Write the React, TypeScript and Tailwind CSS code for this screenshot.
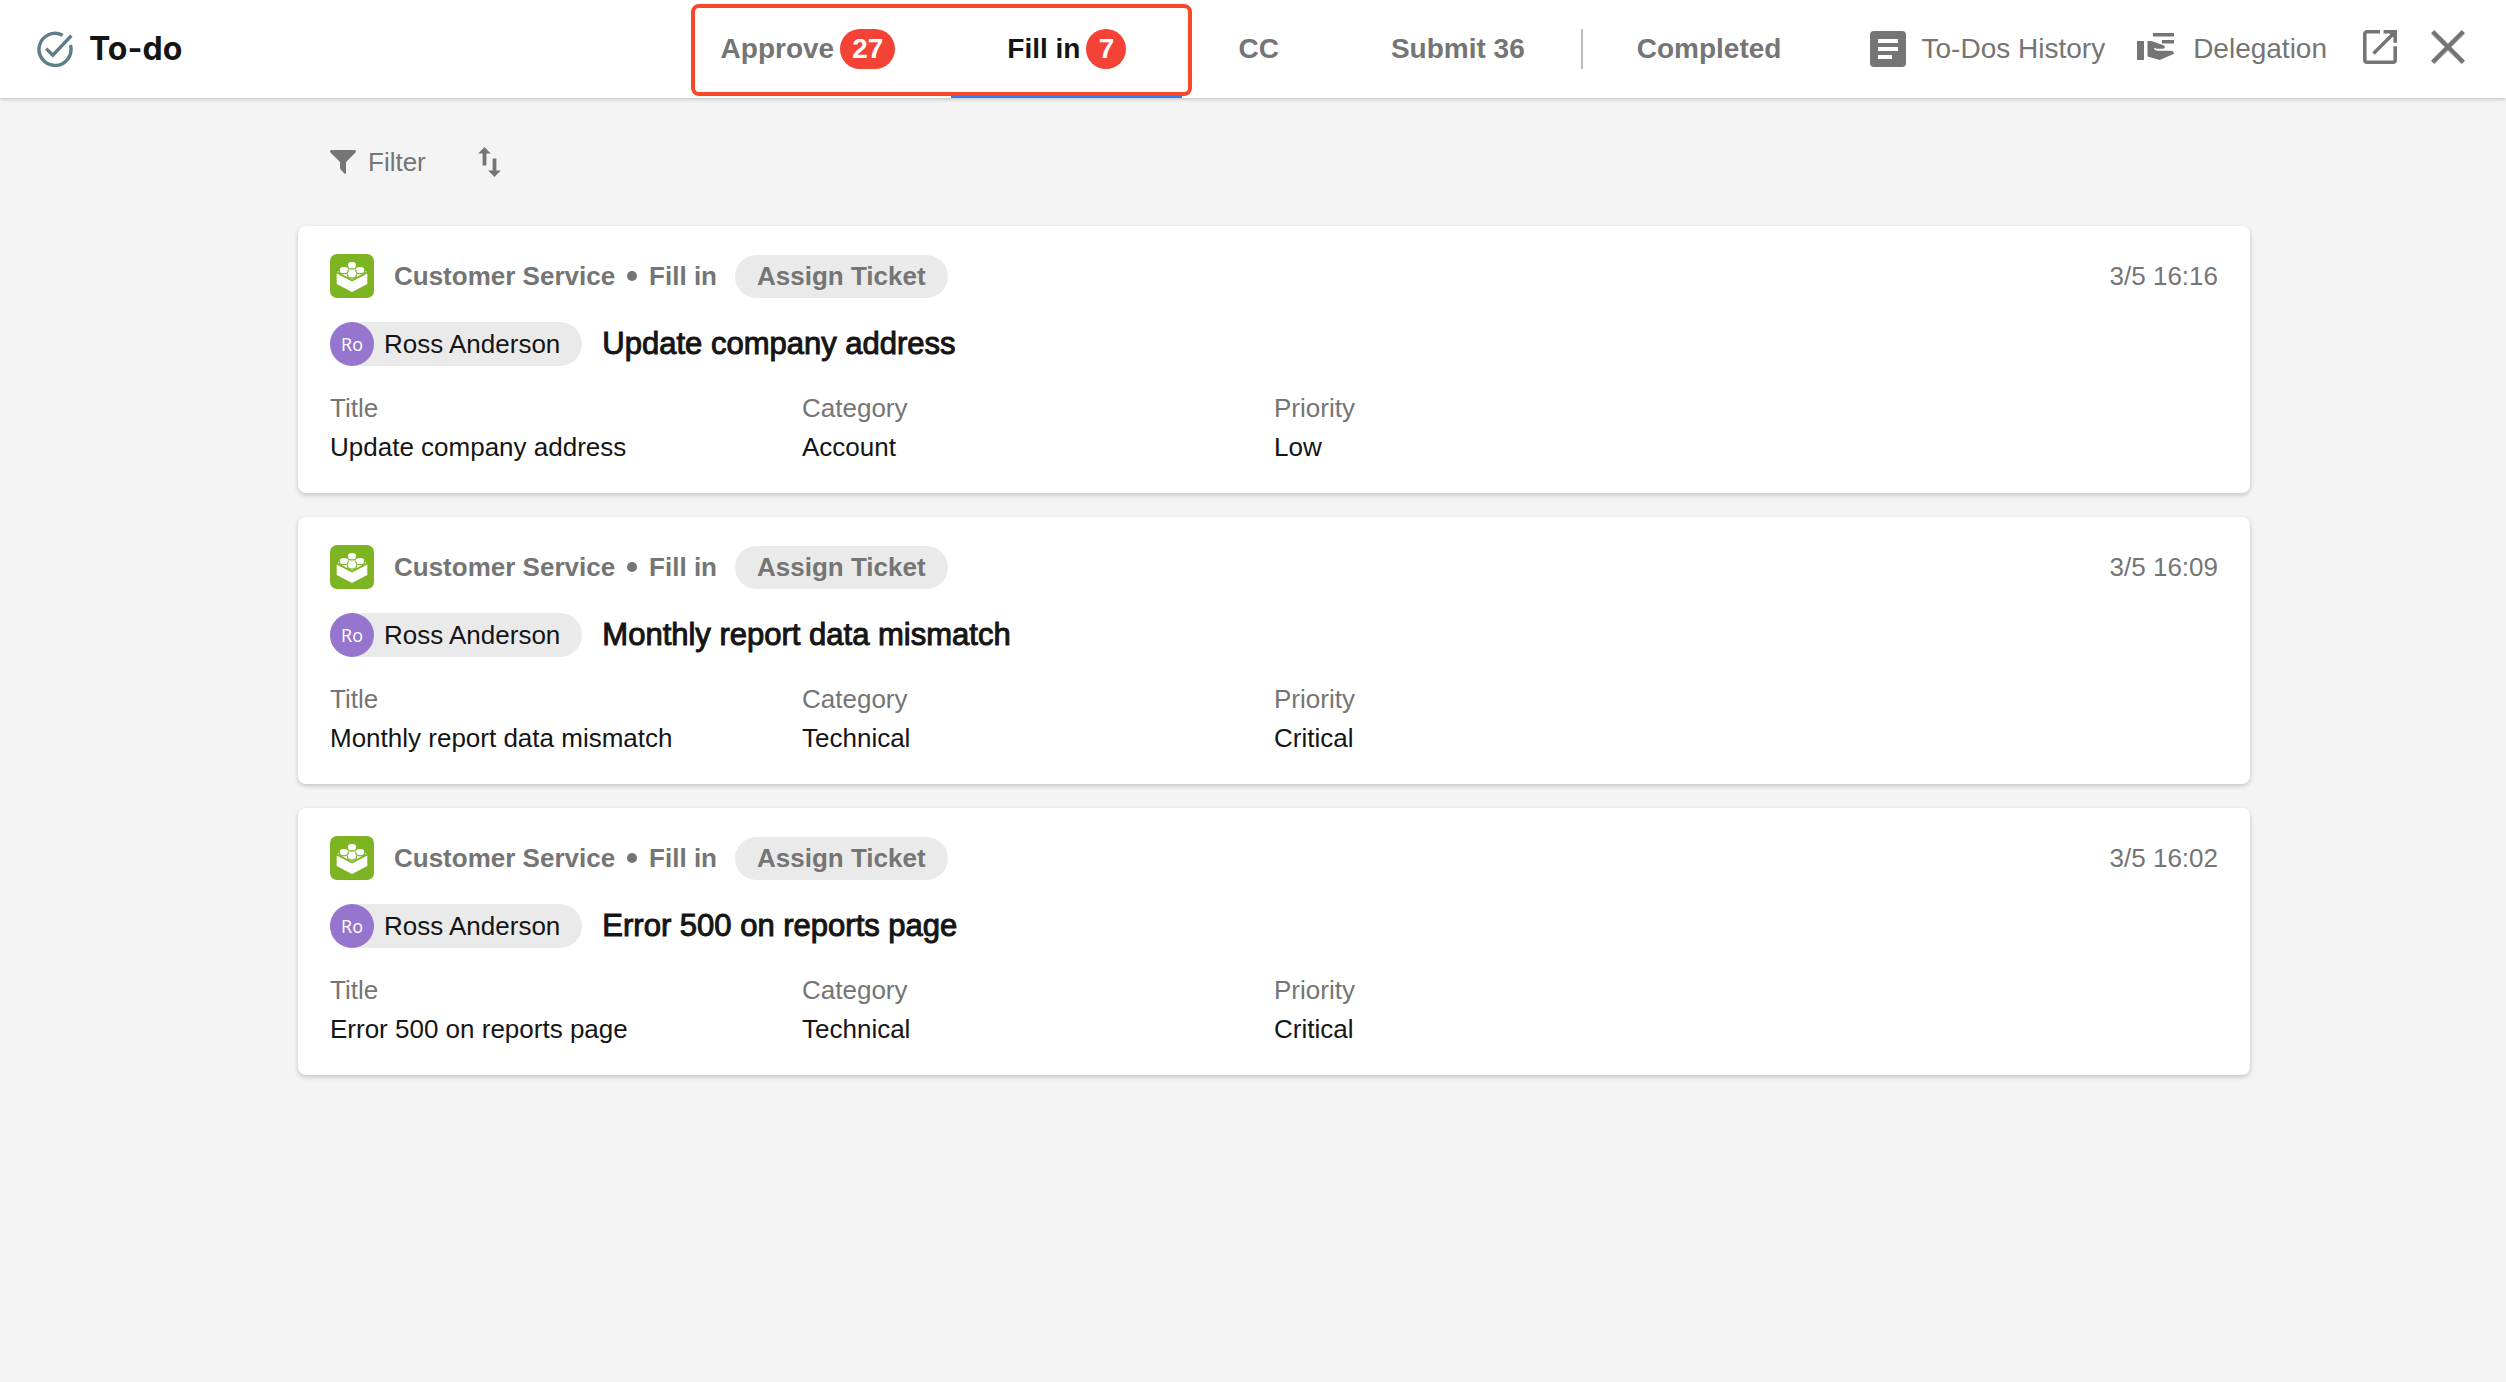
const tickets = [
  { id: 1, title: "Update company address", category: "Account", priority: "Low", time: "3/5 16:16" },
  { id: 2, title: "Monthly report data mismatch", category: "Technical", priority: "Critical", time: "3/5 16:09" },
  { id: 3, title: "Error 500 on reports page", category: "Technical", priority: "Critical", time: "3/5 16:02" },
];

const tabs = [
  { label: "Approve", badge: 27 },
  { label: "Fill in", badge: 7, active: true },
  { label: "CC" },
  { label: "Submit 36" },
  { label: "Completed", divided: true },
];

function TodoIcon() {
  return (
    <svg width="36" height="36" viewBox="0 0 36 36" fill="none" stroke="#607d8b" strokeWidth="3.4">
      <path d="M25.6 4.3A16 16 0 1 0 33.4 14" />
      <path d="M9.2 17.6l6.6 6.6L34.4 4.6" />
    </svg>
  );
}

function HistoryIcon() {
  return (
    <svg width="36" height="36" viewBox="0 0 36 36">
      <rect width="36" height="36" rx="4" fill="#757575" />
      <path d="M8 8h20v4H8zM8 16h20v4H8zM8 24h14v4H8z" fill="#fff" />
    </svg>
  );
}

function DelegationIcon() {
  return (
    <svg width="38" height="38" viewBox="0 0 38 38" fill="#757575">
      <path d="M0 11h7v19H0zM16 3h21v3.6H16zM25 10h12v3.4H25z" />
      <path d="M10.500 11h4l12 4.300c2 .9 1.800 3.300-.4 3.500h-6.200l-2.400-.9-.5 1.400 3.400 1.500H34c2 0 3 1.400 3 3L22.700 30l-12.200-3.600z" />
    </svg>
  );
}

function OpenIcon() {
  return (
    <svg width="34" height="34" viewBox="0 0 34 34" fill="none" stroke="#757575" strokeWidth="3.6">
      <path d="M17 1.800H4A2.200 2.200 0 0 0 1.800 4v26A2.200 2.200 0 0 0 4 32.200h26a2.200 2.200 0 0 0 2.200-2.200V16.200" />
      <path d="M20.600 1.800h11.600v11M31 3L10.500 23.500" />
      <path d="M26 3h5v5z" fill="#757575" stroke="none" />
    </svg>
  );
}

function CloseIcon() {
  return (
    <svg width="34" height="34" viewBox="0 0 34 34" fill="none" stroke="#757575" strokeWidth="4.600">
      <path d="M1.600 1.600l30.800 30.800M32.400 1.600L1.600 32.400" />
    </svg>
  );
}

function FilterIcon() {
  return (
    <svg width="26" height="24" viewBox="0 0 26 24" fill="#757575">
      <path d="M1.500 0h23c1.300 0 1.900 1.500 1 2.500L16 12v11c0 .9-.8 1.200-1.500.6l-3.900-4.100c-.4-.4-.6-.8-.6-1.400V12L.5 2.500C-.4 1.500.2 0 1.500 0z" />
    </svg>
  );
}

function SortIcon() {
  return (
    <svg width="23" height="30" viewBox="0 0 23 30" fill="#757575">
      <path d="M6.500 0l6.300 6.500H8.400v12H4.600v-12H.2zM16.500 30l-6.300-6.500h4.400v-12h3.800v12h4.400z" />
    </svg>
  );
}

function BrickIcon() {
  return (
    <svg width="44" height="44" viewBox="0 0 44 44" className="shrink-0">
      <rect width="44" height="44" rx="7" fill="#7cb521" />
      <path d="M6.700 19.600L22 27.600l15.300-8V30L22 38 6.700 30z" fill="#fff" />
      <path d="M22 11.500l14.500 6.200L22 25.600 7.500 17.700z" fill="#fff" />
      <g fill="#fff" stroke="#7cb521" strokeWidth="1.200">
        <path d="M17.700 10v2.400c0 3.400 8.600 3.400 8.600 0V10" />
        <path d="M9.500 15.200v2c0 3.400 8.600 3.400 8.600 0v-2" />
        <path d="M25.900 15.200v2c0 3.400 8.600 3.400 8.600 0v-2" />
        <path d="M17.700 19.700v1.800c0 3.400 8.600 3.400 8.600 0v-1.800" />
      </g>
      <g fill="#fff">
        <ellipse cx="22" cy="10.300" rx="3.900" ry="2.200" />
        <ellipse cx="13.800" cy="15.200" rx="3.900" ry="2.200" />
        <ellipse cx="30.200" cy="15.200" rx="3.900" ry="2.200" />
        <ellipse cx="22" cy="19.800" rx="3.900" ry="2.200" />
      </g>
    </svg>
  );
}

function Header() {
  return (
    <header className="relative flex h-[98px] bg-white shadow-[0_1px_4px_rgba(0,0,0,0.24)]">
      <div className="flex flex-1 basis-0 items-center gap-4 pl-[37px]">
        <TodoIcon />
        <h1 className="font-['Inter'] text-[32px] font-bold text-[#151515]">To-do</h1>
      </div>

      <nav className="relative flex">
        {tabs.map((tab) => (
          <button
            key={tab.label}
            className={`relative flex items-center gap-1.5 px-14 text-[28px] font-bold ${
              tab.active ? "text-[#151515]" : "text-[#757575]"
            }`}
          >
            {tab.divided && <span className="absolute left-0 h-10 w-0.5 bg-[#bdbdbd]" />}
            {tab.label}
            {tab.badge && (
              <span className="flex h-10 min-w-10 items-center justify-center rounded-full bg-[#f44336] px-3 text-white">
                {tab.badge}
              </span>
            )}
            {tab.active && <span className="absolute inset-x-0 bottom-0 h-1 bg-[#2d7ff9]" />}
          </button>
        ))}
        {/* outline around the two tabs that have pending items */}
        <div className="pointer-events-none absolute top-1 left-[26px] h-[92px] w-[501px] rounded-lg border-4 border-[#f94827]" />
      </nav>

      <div className="flex flex-1 basis-0 items-center justify-end pr-[41px] text-[28px] whitespace-nowrap text-[#757575]">
        <button className="flex items-center gap-4">
          <HistoryIcon />
          To-Dos History
        </button>
        <button className="ml-8 flex items-center gap-[18px]">
          <DelegationIcon />
          Delegation
        </button>
        <button aria-label="Open in new window" className="ml-9 pb-1">
          <OpenIcon />
        </button>
        <button aria-label="Close" className="ml-[34px] pb-1">
          <CloseIcon />
        </button>
      </div>
    </header>
  );
}

function TicketCard({ ticket }: { ticket: (typeof tickets)[0] }) {
  const fields = [
    { name: "Title", value: ticket.title },
    { name: "Category", value: ticket.category },
    { name: "Priority", value: ticket.priority },
  ];

  return (
    <article className="rounded-lg bg-white px-8 pt-7 pb-[26px] shadow-[0_2px_5px_rgba(0,0,0,0.2)]">
      <div className="flex h-11 items-center font-bold text-[#757575]">
        <BrickIcon />
        <span className="ml-5">Customer Service</span>
        <span className="mx-3 size-2.5 rounded-full bg-[#757575]" />
        <span>Fill in</span>
        <span className="ml-[18px] flex h-[43px] items-center rounded-full bg-[#eaeaea] px-[22px]">Assign Ticket</span>
        <time className="ml-auto font-normal">{ticket.time}</time>
      </div>

      <div className="mt-6 flex h-11 items-center gap-5">
        <span className="flex h-11 items-center gap-2.5 rounded-full bg-[#eaeaea] pr-[22px]">
          <span className="flex size-11 items-center justify-center rounded-full bg-[#9575cd] font-['Open_Sans'] text-lg text-white">
            Ro
          </span>
          Ross Anderson
        </span>
        <h2 className="text-[31px] [-webkit-text-stroke:1px_currentColor]">{ticket.title}</h2>
      </div>

      <dl className="mt-[23px] grid grid-cols-4">
        {fields.map((field) => (
          <div key={field.name} className="leading-[39px]">
            <dt className="text-[#757575]">{field.name}</dt>
            <dd>{field.value}</dd>
          </div>
        ))}
      </dl>
    </article>
  );
}

export default function App() {
  return (
    <div className="min-h-screen bg-[#f4f4f4] font-['Liberation_Sans',sans-serif] text-[26px] text-[#151515]">
      <Header />
      <main className="pr-64 pl-[298px]">
        <div className="flex h-32 items-center gap-[52px] px-8 text-[#757575]">
          <button className="flex items-center gap-3">
            <FilterIcon />
            Filter
          </button>
          <button aria-label="Sort">
            <SortIcon />
          </button>
        </div>
        <div className="flex flex-col gap-6">
          {tickets.map((ticket) => (
            <TicketCard key={ticket.id} ticket={ticket} />
          ))}
        </div>
      </main>
    </div>
  );
}
